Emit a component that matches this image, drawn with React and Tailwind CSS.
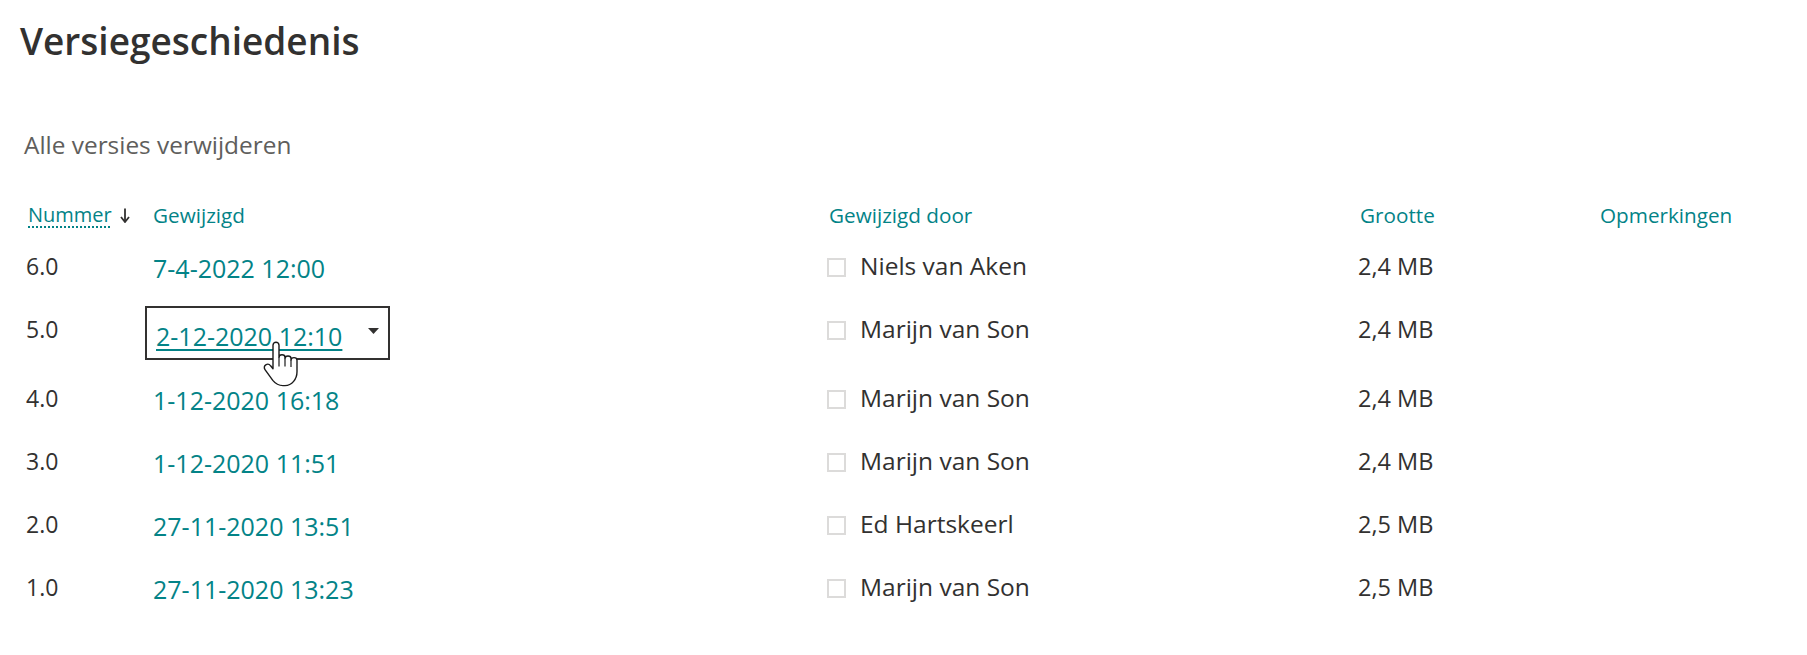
import React from "react";

const versions = [
  { nr: "6.0", date: "7-4-2022 12:00", by: "Niels van Aken", size: "2,4 MB" },
  { nr: "5.0", date: "2-12-2020 12:10", by: "Marijn van Son", size: "2,4 MB", focused: true },
  { nr: "4.0", date: "1-12-2020 16:18", by: "Marijn van Son", size: "2,4 MB" },
  { nr: "3.0", date: "1-12-2020 11:51", by: "Marijn van Son", size: "2,4 MB" },
  { nr: "2.0", date: "27-11-2020 13:51", by: "Ed Hartskeerl", size: "2,5 MB" },
  { nr: "1.0", date: "27-11-2020 13:23", by: "Marijn van Son", size: "2,5 MB" },
];

const cols = "grid grid-cols-[127px_674px_531px_242px_1fr]";

const SortArrow = () => (
  <svg width="10" height="15" viewBox="0 0 10 15" className="ml-[8px] mt-[7px]">
    <path d="M5 0.5V13" stroke="#323130" strokeWidth="1.8" fill="none" />
    <path d="M1 9L5 14L9 9" stroke="#323130" strokeWidth="1.8" fill="none" />
  </svg>
);

const HandCursor = () => (
  <svg width="36" height="47" viewBox="0 0 18 23.5" className="absolute left-[116px] top-[33px]">
    <path
      d="M6.5 0.6c0.8 0 1.5 0.7 1.5 1.5V8.2c0-0.8 0.7-1.3 1.5-1.3s1.5 0.5 1.5 1.3v0.6c0-0.8 0.7-1.3 1.5-1.3s1.5 0.5 1.5 1.3v0.8c0-0.8 0.7-1.3 1.5-1.3s1.5 0.5 1.5 1.3V15.4c0 3.6-2.5 6.9-6 6.9H10c-2.5 0-3.9-1.1-5.1-2.6L1 14.3c-0.6-0.8-0.4-1.9 0.4-2.4c0.8-0.5 1.8-0.3 2.4 0.5L5 13.9V2.1c0-0.8 0.7-1.5 1.5-1.5z"
      fill="#fff"
      stroke="#1b1b1b"
      strokeWidth="0.7"
      strokeLinejoin="round"
    />
    <path d="M8 8.2v4.6M11 8.8v4M14 9.6v3.4" stroke="#1b1b1b" strokeWidth="0.6" fill="none" />
  </svg>
);

const Row = ({ v }) => (
  <div className={`${cols} ${v.focused ? "h-[69px]" : "h-[63px]"} items-start text-[23px] leading-[32px]`}>
    <span className="text-[#323130]">{v.nr}</span>
    {v.focused ? (
      <div className="relative -ml-[8px] -mt-[7px] flex h-[54px] w-[245px] items-start border-2 border-[#323130] pl-[9px] pt-[12px]">
        <span className="text-[25px] text-[#038387] underline decoration-[1.5px] underline-offset-[3px]">{v.date}</span>
        <svg width="11" height="6" viewBox="0 0 11 6" className="ml-auto mr-[9px] mt-[8px]">
          <path d="M0 0H11L5.5 6Z" fill="#323130" />
        </svg>
        <HandCursor />
      </div>
    ) : (
      <span className="mt-[2px] text-[25px] text-[#038387]">{v.date}</span>
    )}
    <div className="flex items-start">
      <span className="mt-[8px] h-[19px] w-[19px] border-2 border-[#dcdbda]" />
      <span className="ml-[14px] text-[24.5px] text-[#323130]">{v.by}</span>
    </div>
    <span className="text-[23.5px] text-[#323130]">{v.size}</span>
    <span />
  </div>
);

export default function App() {
  return (
    <div className="min-h-screen bg-white px-[20px] font-['Open_Sans',sans-serif]">
      <h1 className="pt-[17px] text-[37px] font-semibold leading-[48px] text-[#323130]">Versiegeschiedenis</h1>
      <button className="ml-[4px] mt-[64px] block text-[24.4px] leading-[32px] text-[#605e5c]">
        Alle versies verwijderen
      </button>
      <div className="ml-[6px] mt-[40px]">
        <div className={`${cols} text-[20.7px] leading-[28px] text-[#038387]`}>
          <div className="flex items-start">
            <span className="ml-[2px] text-[20px] underline decoration-dotted decoration-[1.5px] underline-offset-[4px]">Nummer</span>
            <SortArrow />
          </div>
          <span>Gewijzigd</span>
          <span className="ml-[2px]">Gewijzigd door</span>
          <span className="ml-[2px]">Grootte</span>
          <span>Opmerkingen</span>
        </div>
        <div className="mt-[21px]">
          {versions.map((v) => (
            <Row key={v.nr} v={v} />
          ))}
        </div>
      </div>
    </div>
  );
}
